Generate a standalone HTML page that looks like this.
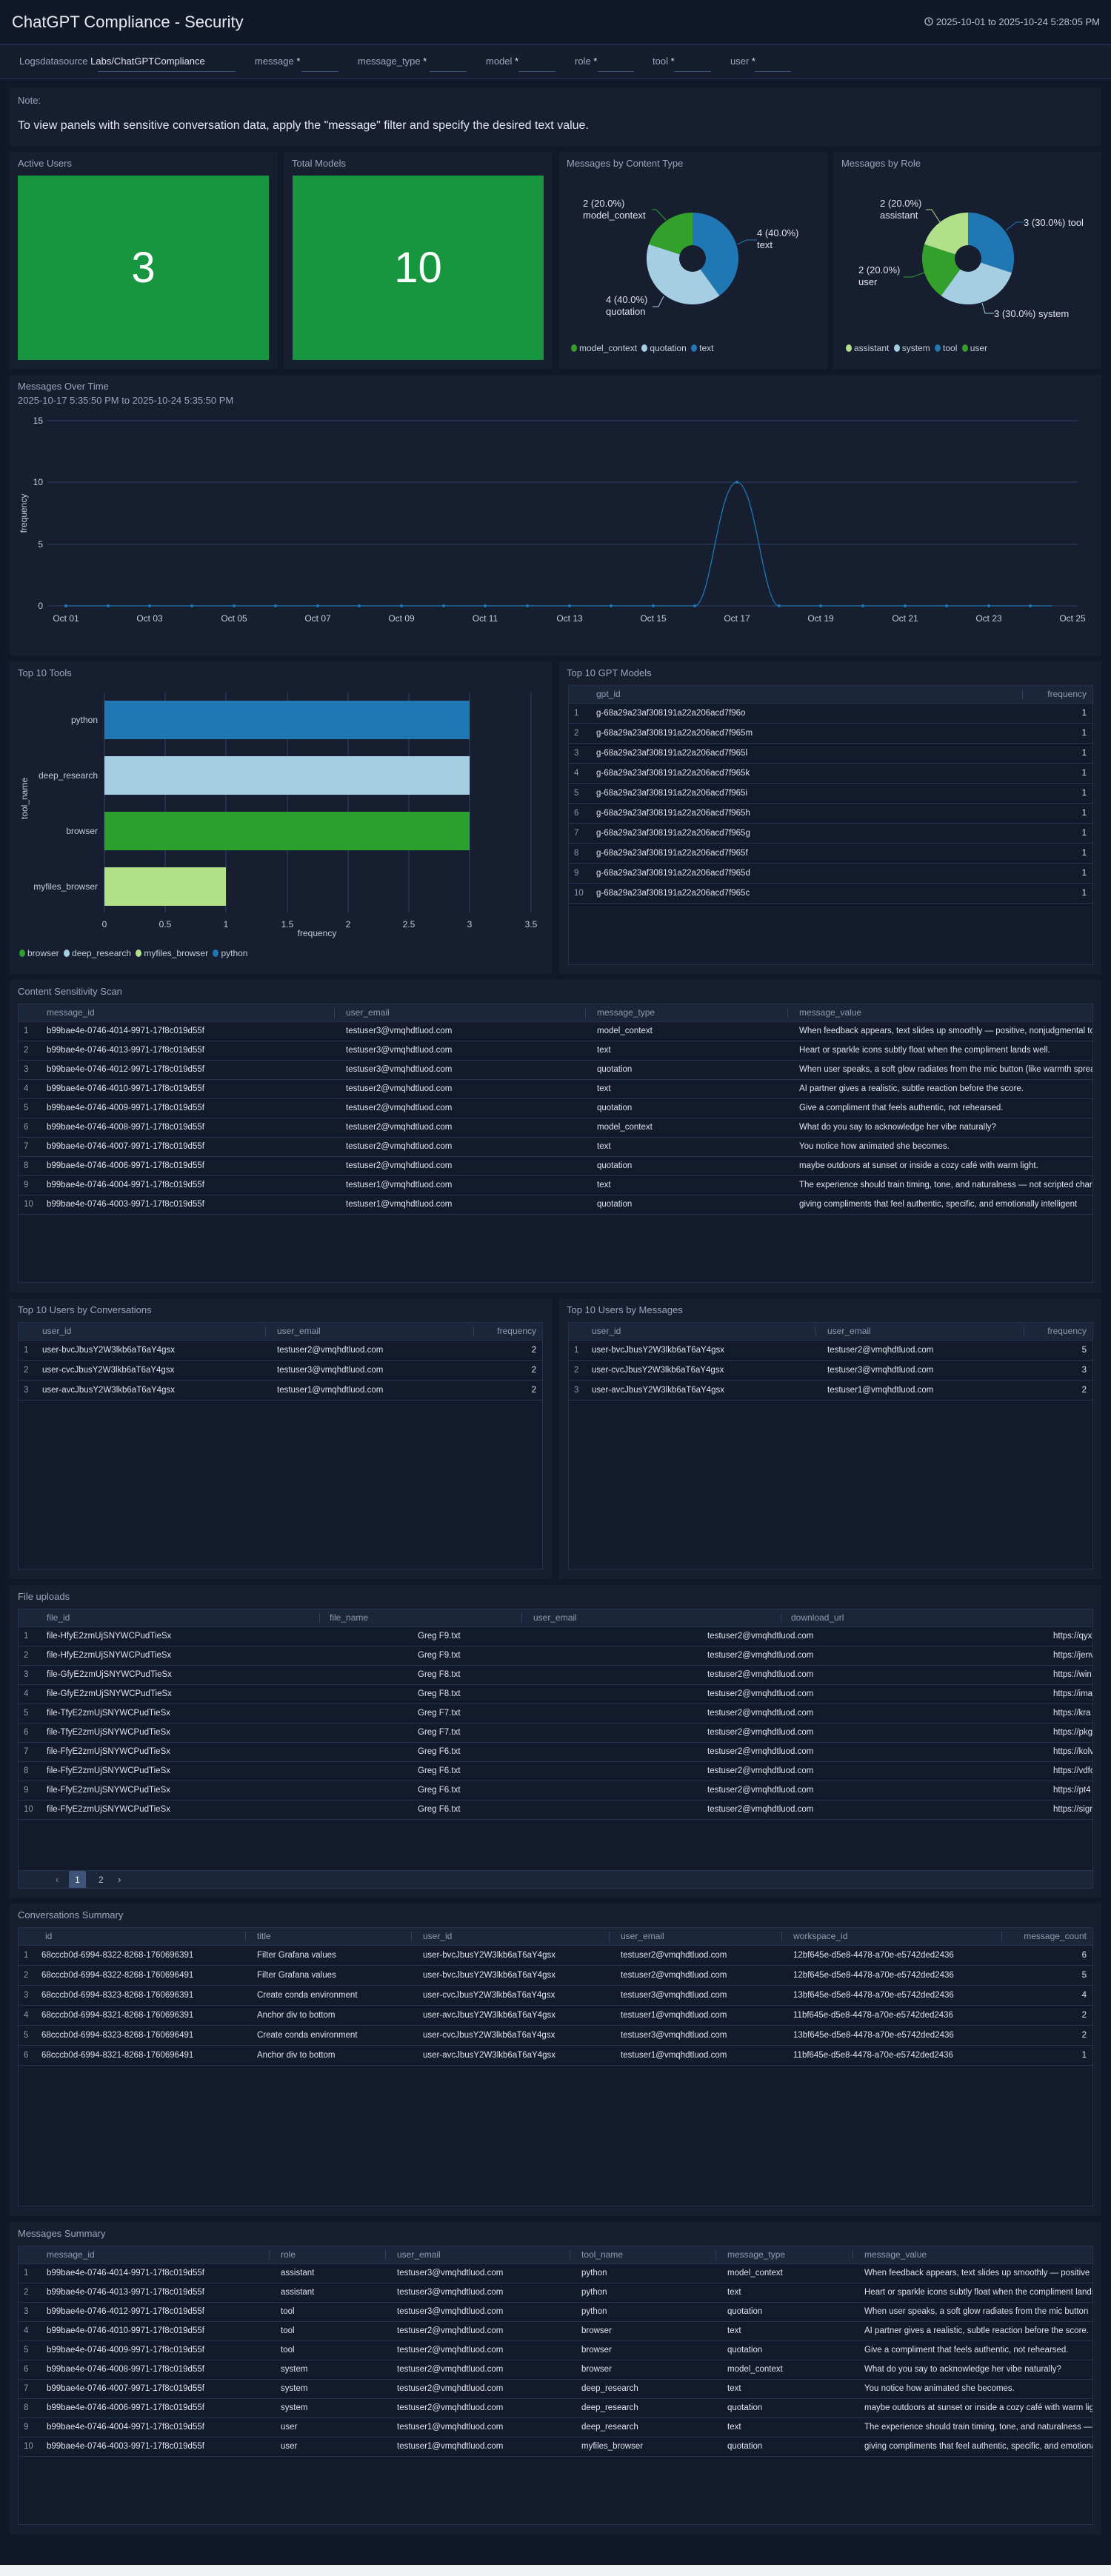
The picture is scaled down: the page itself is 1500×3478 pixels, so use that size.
<!DOCTYPE html>
<html><head><meta charset="utf-8">
<style>
*{box-sizing:border-box;margin:0;padding:0}
html,body{width:1500px;height:3478px;background:#f0f3f4;overflow:hidden}
body{font-family:"Liberation Sans",Arial,sans-serif;color:#d8dde6;position:relative}
#page{position:absolute;left:0;top:0;width:1500px;height:3463px;background:#111827}
.abs{position:absolute}
.panel{position:absolute;background:#161e30}
.ptitle{position:absolute;left:11px;top:8px;font-size:13px;color:#9aa6ba;white-space:nowrap}
.tbl{position:absolute;border:1px solid #24334d;background:#131a2b;overflow:hidden}
table{border-collapse:collapse;table-layout:fixed;width:100%}
th{height:23px;background:#1b263a;color:#8e9bb0;font-weight:normal;font-size:12px;text-align:left;white-space:nowrap;overflow:hidden;padding:0 8px;border-bottom:1px solid #24334d;position:relative}
th.s::before{content:"";position:absolute;left:0;top:5px;height:13px;border-left:1px solid #2e4060}
td{font-size:11.5px;white-space:nowrap;overflow:hidden;padding:0 8px;border-bottom:1px solid #24334d;color:#dde2ea}
td.n{color:#8e9bb0;padding:0 0 0 7px}
td.v{overflow:visible}
.r{text-align:right}
.r26 td{height:26px}
.r27 td{height:27px}
.flt{position:absolute;top:75px;font-size:13px;color:#9aa6ba;white-space:nowrap}
.fv{color:#e2e6ee}
.ul{position:absolute;top:96px;height:1px;background:#3b5278}
.lg{position:absolute;font-size:12px;color:#c5ccd8;white-space:nowrap}
.dot{display:inline-block;width:8px;height:10px;border-radius:50%;margin-right:3px;vertical-align:-1px}
</style></head><body>
<div id="page"></div>

<div class="abs" style="left:16px;top:17px;font-size:22px;color:#e8ebf0">ChatGPT Compliance - Security</div>
<div class="abs" style="right:15px;top:22px;font-size:13px;color:#b8c0cc;white-space:nowrap">
<svg width="12" height="12" viewBox="0 0 12 12" style="vertical-align:-1px"><circle cx="6" cy="6" r="5" fill="none" stroke="#b8c0cc" stroke-width="1.3"/><path d="M6 3v3.2l2 1.2" fill="none" stroke="#b8c0cc" stroke-width="1.2"/></svg> 2025-10-01 to 2025-10-24 5:28:05 PM</div>
<div class="abs" style="left:0;top:60px;width:1500px;height:47px;background:#151d2f;border-top:1px solid #26395a;border-bottom:1px solid #26395a"></div>
<div class="flt" style="left:26px">Logsdatasource <span class="fv">Labs/ChatGPTCompliance</span></div>
<div class="ul" style="left:132px;width:186px"></div>
<div class="flt" style="left:344px">message <span class="fv">*</span></div><div class="ul" style="left:407px;width:50px"></div>
<div class="flt" style="left:483px">message_type <span class="fv">*</span></div><div class="ul" style="left:580px;width:50px"></div>
<div class="flt" style="left:656px">model <span class="fv">*</span></div><div class="ul" style="left:700px;width:50px"></div>
<div class="flt" style="left:776px">role <span class="fv">*</span></div><div class="ul" style="left:807px;width:49px"></div>
<div class="flt" style="left:881px">tool <span class="fv">*</span></div><div class="ul" style="left:910px;width:50px"></div>
<div class="flt" style="left:986px">user <span class="fv">*</span></div><div class="ul" style="left:1019px;width:49px"></div>

<div class="panel" style="left:13px;top:119px;width:1474px;height:78px">
<div class="abs" style="left:11px;top:9px;font-size:13px;color:#9aa6ba">Note:</div>
<div class="abs" style="left:11px;top:42px;font-size:16px;color:#e2e6ee;white-space:nowrap">To view panels with sensitive conversation data, apply the "message" filter and specify the desired text value.</div>
</div>

<div class="panel" style="left:13px;top:205px;width:362px;height:293px"><div class="ptitle">Active Users</div>
<div class="abs" style="left:11px;top:32px;width:339px;height:249px;background:#18953f;color:#fff;font-size:58px;display:flex;align-items:center;justify-content:center">3</div></div>
<div class="panel" style="left:383px;top:205px;width:362px;height:293px"><div class="ptitle">Total Models</div>
<div class="abs" style="left:12px;top:32px;width:339px;height:249px;background:#18953f;color:#fff;font-size:58px;display:flex;align-items:center;justify-content:center">10</div></div>
<div class="panel" style="left:754px;top:205px;width:363px;height:293px"><div class="ptitle">Messages by Content Type</div></div>
<div class="panel" style="left:1125px;top:205px;width:362px;height:293px"><div class="ptitle">Messages by Role</div></div>

<svg class="abs" style="left:0;top:0" width="1500" height="500">
<g font-family="Liberation Sans, Arial, sans-serif" font-size="13" fill="#dfe3ea">
<path d="M935,349 L935,287 A62,62 0 0 1 971.4,399.2 Z" fill="#1f78b4"/>
<path d="M935,349 L971.4,399.2 A62,62 0 0 1 876,329.8 Z" fill="#a6cee3"/>
<path d="M935,349 L876,329.8 A62,62 0 0 1 935,287 Z" fill="#33a02c"/>
<circle cx="935" cy="349" r="18" fill="#161e30"/>
<polyline points="880,283 886,283 899,297" fill="none" stroke="#33a02c"/>
<polyline points="995,330 1008,324 1022,324" fill="none" stroke="#1f78b4"/>
<polyline points="896,400 889,414 881,414" fill="none" stroke="#a6cee3"/>
<text x="787" y="279">2 (20.0%)</text><text x="787" y="295">model_context</text>
<text x="1022" y="319">4 (40.0%)</text><text x="1022" y="335">text</text>
<text x="818" y="409">4 (40.0%)</text><text x="818" y="425">quotation</text>
<path d="M1307,349 L1307,287 A62,62 0 0 1 1366,368.2 Z" fill="#1f78b4"/>
<path d="M1307,349 L1366,368.2 A62,62 0 0 1 1270.6,399.2 Z" fill="#a6cee3"/>
<path d="M1307,349 L1270.6,399.2 A62,62 0 0 1 1248,329.8 Z" fill="#33a02c"/>
<path d="M1307,349 L1248,329.8 A62,62 0 0 1 1307,287 Z" fill="#b2df8a"/>
<circle cx="1307" cy="349" r="18" fill="#161e30"/>
<polyline points="1250,283 1258,283 1269,300" fill="none" stroke="#b2df8a"/>
<polyline points="1358,311 1372,300 1382,300" fill="none" stroke="#1f78b4"/>
<polyline points="1248,368 1232,374 1220,374" fill="none" stroke="#33a02c"/>
<polyline points="1326,409 1330,423 1342,423" fill="none" stroke="#a6cee3"/>
<text x="1188" y="279">2 (20.0%)</text><text x="1188" y="295">assistant</text>
<text x="1382" y="305">3 (30.0%) tool</text>
<text x="1159" y="369">2 (20.0%)</text><text x="1159" y="385">user</text>
<text x="1342" y="428">3 (30.0%) system</text>
</g></svg>
<div class="lg" style="left:771px;top:463px"><span class="dot" style="background:#33a02c"></span>model_context <span class="dot" style="background:#a6cee3;margin-left:3px"></span>quotation <span class="dot" style="background:#1f78b4;margin-left:3px"></span>text</div>
<div class="lg" style="left:1142px;top:463px"><span class="dot" style="background:#b2df8a"></span>assistant <span class="dot" style="background:#a6cee3;margin-left:3px"></span>system <span class="dot" style="background:#1f78b4;margin-left:3px"></span>tool <span class="dot" style="background:#33a02c;margin-left:3px"></span>user</div>

<div class="panel" style="left:13px;top:506px;width:1474px;height:379px">
<div class="ptitle">Messages Over Time</div>
<div class="abs" style="left:11px;top:27px;font-size:13px;color:#9aa6ba;white-space:nowrap">2025-10-17 5:35:50 PM to 2025-10-24 5:35:50 PM</div>
</div>
<svg class="abs" style="left:0;top:500px" width="1500" height="390">
<g font-family="Liberation Sans, Arial, sans-serif" font-size="12" fill="#c5ccd8">
<g stroke="#2c4366" stroke-width="1">
<line x1="64" y1="68" x2="1455" y2="68"/><line x1="64" y1="151" x2="1455" y2="151"/>
<line x1="64" y1="235" x2="1455" y2="235"/><line x1="64" y1="318" x2="1455" y2="318"/>
</g>
<text x="58" y="72" text-anchor="end">15</text><text x="58" y="155" text-anchor="end">10</text>
<text x="58" y="239" text-anchor="end">5</text><text x="58" y="322" text-anchor="end">0</text>
<text transform="translate(36,193) rotate(-90)" text-anchor="middle" font-size="12">frequency</text>
<g text-anchor="middle">
<text x="89" y="339">Oct 01</text><text x="202" y="339">Oct 03</text><text x="316" y="339">Oct 05</text><text x="429" y="339">Oct 07</text><text x="542" y="339">Oct 09</text><text x="655" y="339">Oct 11</text><text x="769" y="339">Oct 13</text><text x="882" y="339">Oct 15</text><text x="995" y="339">Oct 17</text><text x="1108" y="339">Oct 19</text><text x="1222" y="339">Oct 21</text><text x="1335" y="339">Oct 23</text><text x="1448" y="339">Oct 25</text>
</g>
<path d="M89,318 L938,318 C960,318 970,151 995,151 C1020,151 1030,318 1052,318 L1420,318" fill="none" stroke="#1f78b4" stroke-width="1.3"/>
<g fill="#1f78b4">
<circle cx="89" cy="318" r="2"/><circle cx="146" cy="318" r="2"/><circle cx="202" cy="318" r="2"/><circle cx="259" cy="318" r="2"/><circle cx="316" cy="318" r="2"/><circle cx="372" cy="318" r="2"/><circle cx="429" cy="318" r="2"/><circle cx="485" cy="318" r="2"/><circle cx="542" cy="318" r="2"/><circle cx="599" cy="318" r="2"/><circle cx="655" cy="318" r="2"/><circle cx="712" cy="318" r="2"/><circle cx="769" cy="318" r="2"/><circle cx="825" cy="318" r="2"/><circle cx="882" cy="318" r="2"/><circle cx="938" cy="318" r="2"/><circle cx="995" cy="151" r="2"/><circle cx="1052" cy="318" r="2"/><circle cx="1108" cy="318" r="2"/><circle cx="1165" cy="318" r="2"/><circle cx="1222" cy="318" r="2"/><circle cx="1278" cy="318" r="2"/><circle cx="1335" cy="318" r="2"/><circle cx="1391" cy="318" r="2"/>
</g></g></svg>

<div class="panel" style="left:13px;top:893px;width:732px;height:422px"><div class="ptitle">Top 10 Tools</div></div>
<svg class="abs" style="left:0;top:890px" width="750" height="420">
<g font-family="Liberation Sans, Arial, sans-serif" font-size="12" fill="#c5ccd8">
<g stroke="#2c4366"><line x1="141" y1="45" x2="141" y2="342"/><line x1="223" y1="45" x2="223" y2="342"/><line x1="305" y1="45" x2="305" y2="342"/><line x1="388" y1="45" x2="388" y2="342"/><line x1="470" y1="45" x2="470" y2="342"/><line x1="552" y1="45" x2="552" y2="342"/><line x1="634" y1="45" x2="634" y2="342"/><line x1="717" y1="45" x2="717" y2="342"/></g>
<rect x="141" y="56" width="493" height="52" fill="#1f78b4"/>
<rect x="141" y="131" width="493" height="52" fill="#a6cee3"/>
<rect x="141" y="206" width="493" height="52" fill="#2ca02c"/>
<rect x="141" y="281" width="164" height="52" fill="#b2df8a"/>
<g text-anchor="end"><text x="132" y="86">python</text><text x="132" y="161">deep_research</text><text x="132" y="236">browser</text><text x="132" y="311">myfiles_browser</text></g>
<text transform="translate(37,188) rotate(-90)" text-anchor="middle">tool_name</text>
<g text-anchor="middle"><text x="141" y="362">0</text><text x="223" y="362">0.5</text><text x="305" y="362">1</text><text x="388" y="362">1.5</text><text x="470" y="362">2</text><text x="552" y="362">2.5</text><text x="634" y="362">3</text><text x="717" y="362">3.5</text><text x="428" y="374">frequency</text></g>
</g></svg>
<div class="lg" style="left:26px;top:1280px"><span class="dot" style="background:#2ca02c"></span>browser <span class="dot" style="background:#a6cee3;margin-left:3px"></span>deep_research <span class="dot" style="background:#b2df8a;margin-left:3px"></span>myfiles_browser <span class="dot" style="background:#1f78b4;margin-left:3px"></span>python</div>

<div class="panel" style="left:754px;top:893px;width:733px;height:422px"><div class="ptitle">Top 10 GPT Models</div></div>
<div class="tbl" style="left:767px;top:925px;width:709px;height:378px">
<table class="r27"><colgroup><col style="width:29px"><col><col style="width:95px"></colgroup>
<tr><th></th><th>gpt_id</th><th class="s r">frequency</th></tr>
<tr><td class="n">1</td><td>g-68a29a23af308191a22a206acd7f96o</td><td class="r">1</td></tr>
<tr><td class="n">2</td><td>g-68a29a23af308191a22a206acd7f965m</td><td class="r">1</td></tr>
<tr><td class="n">3</td><td>g-68a29a23af308191a22a206acd7f965l</td><td class="r">1</td></tr>
<tr><td class="n">4</td><td>g-68a29a23af308191a22a206acd7f965k</td><td class="r">1</td></tr>
<tr><td class="n">5</td><td>g-68a29a23af308191a22a206acd7f965i</td><td class="r">1</td></tr>
<tr><td class="n">6</td><td>g-68a29a23af308191a22a206acd7f965h</td><td class="r">1</td></tr>
<tr><td class="n">7</td><td>g-68a29a23af308191a22a206acd7f965g</td><td class="r">1</td></tr>
<tr><td class="n">8</td><td>g-68a29a23af308191a22a206acd7f965f</td><td class="r">1</td></tr>
<tr><td class="n">9</td><td>g-68a29a23af308191a22a206acd7f965d</td><td class="r">1</td></tr>
<tr><td class="n">10</td><td>g-68a29a23af308191a22a206acd7f965c</td><td class="r">1</td></tr>
</table></div>

<div class="panel" style="left:13px;top:1323px;width:1474px;height:422px"><div class="ptitle">Content Sensitivity Scan</div></div>
<div class="tbl" style="left:24px;top:1355px;width:1452px;height:377px">
<table class="r26"><colgroup><col style="width:30px"><col style="width:396px"><col style="width:339px"><col style="width:273px"><col></colgroup>
<tr><th></th><th>message_id</th><th class="s" style="padding-left:16px">user_email</th><th class="s" style="padding-left:16px">message_type</th><th class="s" style="padding-left:16px">message_value</th></tr>
<tr><td class="n">1</td><td>b99bae4e-0746-4014-9971-17f8c019d55f</td><td style="padding-left:16px">testuser3@vmqhdtluod.com</td><td style="padding-left:16px">model_context</td><td style="padding-left:16px">When feedback appears, text slides up smoothly — positive, nonjudgmental tone</td></tr>
<tr><td class="n">2</td><td>b99bae4e-0746-4013-9971-17f8c019d55f</td><td style="padding-left:16px">testuser3@vmqhdtluod.com</td><td style="padding-left:16px">text</td><td style="padding-left:16px">Heart or sparkle icons subtly float when the compliment lands well.</td></tr>
<tr><td class="n">3</td><td>b99bae4e-0746-4012-9971-17f8c019d55f</td><td style="padding-left:16px">testuser3@vmqhdtluod.com</td><td style="padding-left:16px">quotation</td><td style="padding-left:16px">When user speaks, a soft glow radiates from the mic button (like warmth spreading)</td></tr>
<tr><td class="n">4</td><td>b99bae4e-0746-4010-9971-17f8c019d55f</td><td style="padding-left:16px">testuser2@vmqhdtluod.com</td><td style="padding-left:16px">text</td><td style="padding-left:16px">AI partner gives a realistic, subtle reaction before the score.</td></tr>
<tr><td class="n">5</td><td>b99bae4e-0746-4009-9971-17f8c019d55f</td><td style="padding-left:16px">testuser2@vmqhdtluod.com</td><td style="padding-left:16px">quotation</td><td style="padding-left:16px">Give a compliment that feels authentic, not rehearsed.</td></tr>
<tr><td class="n">6</td><td>b99bae4e-0746-4008-9971-17f8c019d55f</td><td style="padding-left:16px">testuser2@vmqhdtluod.com</td><td style="padding-left:16px">model_context</td><td style="padding-left:16px">What do you say to acknowledge her vibe naturally?</td></tr>
<tr><td class="n">7</td><td>b99bae4e-0746-4007-9971-17f8c019d55f</td><td style="padding-left:16px">testuser2@vmqhdtluod.com</td><td style="padding-left:16px">text</td><td style="padding-left:16px">You notice how animated she becomes.</td></tr>
<tr><td class="n">8</td><td>b99bae4e-0746-4006-9971-17f8c019d55f</td><td style="padding-left:16px">testuser2@vmqhdtluod.com</td><td style="padding-left:16px">quotation</td><td style="padding-left:16px">maybe outdoors at sunset or inside a cozy café with warm light.</td></tr>
<tr><td class="n">9</td><td>b99bae4e-0746-4004-9971-17f8c019d55f</td><td style="padding-left:16px">testuser1@vmqhdtluod.com</td><td style="padding-left:16px">text</td><td style="padding-left:16px">The experience should train timing, tone, and naturalness — not scripted charm.</td></tr>
<tr><td class="n">10</td><td>b99bae4e-0746-4003-9971-17f8c019d55f</td><td style="padding-left:16px">testuser1@vmqhdtluod.com</td><td style="padding-left:16px">quotation</td><td style="padding-left:16px">giving compliments that feel authentic, specific, and emotionally intelligent</td></tr>
</table></div>

<div class="panel" style="left:13px;top:1753px;width:732px;height:379px"><div class="ptitle">Top 10 Users by Conversations</div></div>
<div class="tbl" style="left:24px;top:1785px;width:709px;height:334px">
<table class="r27"><colgroup><col style="width:24px"><col style="width:309px"><col style="width:281px"><col></colgroup>
<tr><th></th><th>user_id</th><th class="s" style="padding-left:16px">user_email</th><th class="s r">frequency</th></tr>
<tr><td class="n">1</td><td>user-bvcJbusY2W3lkb6aT6aY4gsx</td><td style="padding-left:16px">testuser2@vmqhdtluod.com</td><td class="r">2</td></tr>
<tr><td class="n">2</td><td>user-cvcJbusY2W3lkb6aT6aY4gsx</td><td style="padding-left:16px">testuser3@vmqhdtluod.com</td><td class="r">2</td></tr>
<tr><td class="n">3</td><td>user-avcJbusY2W3lkb6aT6aY4gsx</td><td style="padding-left:16px">testuser1@vmqhdtluod.com</td><td class="r">2</td></tr>
</table></div>
<div class="panel" style="left:754px;top:1753px;width:733px;height:379px"><div class="ptitle">Top 10 Users by Messages</div></div>
<div class="tbl" style="left:767px;top:1785px;width:709px;height:334px">
<table class="r27"><colgroup><col style="width:23px"><col style="width:310px"><col style="width:281px"><col></colgroup>
<tr><th></th><th>user_id</th><th class="s" style="padding-left:16px">user_email</th><th class="s r">frequency</th></tr>
<tr><td class="n">1</td><td>user-bvcJbusY2W3lkb6aT6aY4gsx</td><td style="padding-left:16px">testuser2@vmqhdtluod.com</td><td class="r">5</td></tr>
<tr><td class="n">2</td><td>user-cvcJbusY2W3lkb6aT6aY4gsx</td><td style="padding-left:16px">testuser3@vmqhdtluod.com</td><td class="r">3</td></tr>
<tr><td class="n">3</td><td>user-avcJbusY2W3lkb6aT6aY4gsx</td><td style="padding-left:16px">testuser1@vmqhdtluod.com</td><td class="r">2</td></tr>
</table></div>

<div class="panel" style="left:13px;top:2140px;width:1474px;height:422px"><div class="ptitle">File uploads</div></div>
<div class="tbl" style="left:24px;top:2172px;width:1452px;height:378px">
<table class="r26"><colgroup><col style="width:30px"><col style="width:376px"><col style="width:273px"><col style="width:350px"><col></colgroup>
<tr><th></th><th>file_id</th><th class="s" style="padding-left:14px">file_name</th><th class="s" style="padding-left:16px">user_email</th><th class="s" style="padding-left:14px">download_url</th></tr>
<tr><td class="n">1</td><td>file-HfyE2zmUjSNYWCPudTieSx</td><td style="padding-left:133px">Greg F9.txt</td><td class="v" style="padding-left:251px">testuser2@vmqhdtluod.com</td><td style="padding-left:368px">https://qyxz</td></tr>
<tr><td class="n">2</td><td>file-HfyE2zmUjSNYWCPudTieSx</td><td style="padding-left:133px">Greg F9.txt</td><td class="v" style="padding-left:251px">testuser2@vmqhdtluod.com</td><td style="padding-left:368px">https://jenv</td></tr>
<tr><td class="n">3</td><td>file-GfyE2zmUjSNYWCPudTieSx</td><td style="padding-left:133px">Greg F8.txt</td><td class="v" style="padding-left:251px">testuser2@vmqhdtluod.com</td><td style="padding-left:368px">https://win</td></tr>
<tr><td class="n">4</td><td>file-GfyE2zmUjSNYWCPudTieSx</td><td style="padding-left:133px">Greg F8.txt</td><td class="v" style="padding-left:251px">testuser2@vmqhdtluod.com</td><td style="padding-left:368px">https://ima</td></tr>
<tr><td class="n">5</td><td>file-TfyE2zmUjSNYWCPudTieSx</td><td style="padding-left:133px">Greg F7.txt</td><td class="v" style="padding-left:251px">testuser2@vmqhdtluod.com</td><td style="padding-left:368px">https://kra</td></tr>
<tr><td class="n">6</td><td>file-TfyE2zmUjSNYWCPudTieSx</td><td style="padding-left:133px">Greg F7.txt</td><td class="v" style="padding-left:251px">testuser2@vmqhdtluod.com</td><td style="padding-left:368px">https://pkg</td></tr>
<tr><td class="n">7</td><td>file-FfyE2zmUjSNYWCPudTieSx</td><td style="padding-left:133px">Greg F6.txt</td><td class="v" style="padding-left:251px">testuser2@vmqhdtluod.com</td><td style="padding-left:368px">https://kolv</td></tr>
<tr><td class="n">8</td><td>file-FfyE2zmUjSNYWCPudTieSx</td><td style="padding-left:133px">Greg F6.txt</td><td class="v" style="padding-left:251px">testuser2@vmqhdtluod.com</td><td style="padding-left:368px">https://vdfc</td></tr>
<tr><td class="n">9</td><td>file-FfyE2zmUjSNYWCPudTieSx</td><td style="padding-left:133px">Greg F6.txt</td><td class="v" style="padding-left:251px">testuser2@vmqhdtluod.com</td><td style="padding-left:368px">https://pt4</td></tr>
<tr><td class="n">10</td><td>file-FfyE2zmUjSNYWCPudTieSx</td><td style="padding-left:133px">Greg F6.txt</td><td class="v" style="padding-left:251px">testuser2@vmqhdtluod.com</td><td style="padding-left:368px">https://sign</td></tr>
</table>
<div class="abs" style="left:0;top:352px;width:1452px;height:26px;background:#1b263a;border-top:1px solid #24334d"></div>
<div class="abs" style="left:50px;top:357px;font-size:13px;color:#7f8ca3">&#x2039;</div>
<div class="abs" style="left:68px;top:353px;width:23px;height:24px;background:#3d5478;border-radius:2px;color:#fff;font-size:12px;text-align:center;line-height:24px">1</div>
<div class="abs" style="left:108px;top:358px;font-size:12px;color:#b8c0cc">2</div>
<div class="abs" style="left:134px;top:357px;font-size:13px;color:#b8c0cc">&#x203A;</div>
</div>

<div class="panel" style="left:13px;top:2570px;width:1474px;height:422px"><div class="ptitle">Conversations Summary</div></div>
<div class="tbl" style="left:24px;top:2602px;width:1452px;height:377px">
<table class="r27"><colgroup><col style="width:23px"><col style="width:283px"><col style="width:224px"><col style="width:267px"><col style="width:233px"><col style="width:297px"><col></colgroup>
<tr><th></th><th style="padding-left:13px">id</th><th class="s" style="padding-left:16px">title</th><th class="s" style="padding-left:16px">user_id</th><th class="s" style="padding-left:16px">user_email</th><th class="s" style="padding-left:16px">workspace_id</th><th class="s r">message_count</th></tr>
<tr><td class="n">1</td><td>68cccb0d-6994-8322-8268-1760696391</td><td style="padding-left:16px">Filter Grafana values</td><td style="padding-left:16px">user-bvcJbusY2W3lkb6aT6aY4gsx</td><td style="padding-left:16px">testuser2@vmqhdtluod.com</td><td style="padding-left:16px">12bf645e-d5e8-4478-a70e-e5742ded2436</td><td class="r">6</td></tr>
<tr><td class="n">2</td><td>68cccb0d-6994-8322-8268-1760696491</td><td style="padding-left:16px">Filter Grafana values</td><td style="padding-left:16px">user-bvcJbusY2W3lkb6aT6aY4gsx</td><td style="padding-left:16px">testuser2@vmqhdtluod.com</td><td style="padding-left:16px">12bf645e-d5e8-4478-a70e-e5742ded2436</td><td class="r">5</td></tr>
<tr><td class="n">3</td><td>68cccb0d-6994-8323-8268-1760696391</td><td style="padding-left:16px">Create conda environment</td><td style="padding-left:16px">user-cvcJbusY2W3lkb6aT6aY4gsx</td><td style="padding-left:16px">testuser3@vmqhdtluod.com</td><td style="padding-left:16px">13bf645e-d5e8-4478-a70e-e5742ded2436</td><td class="r">4</td></tr>
<tr><td class="n">4</td><td>68cccb0d-6994-8321-8268-1760696391</td><td style="padding-left:16px">Anchor div to bottom</td><td style="padding-left:16px">user-avcJbusY2W3lkb6aT6aY4gsx</td><td style="padding-left:16px">testuser1@vmqhdtluod.com</td><td style="padding-left:16px">11bf645e-d5e8-4478-a70e-e5742ded2436</td><td class="r">2</td></tr>
<tr><td class="n">5</td><td>68cccb0d-6994-8323-8268-1760696491</td><td style="padding-left:16px">Create conda environment</td><td style="padding-left:16px">user-cvcJbusY2W3lkb6aT6aY4gsx</td><td style="padding-left:16px">testuser3@vmqhdtluod.com</td><td style="padding-left:16px">13bf645e-d5e8-4478-a70e-e5742ded2436</td><td class="r">2</td></tr>
<tr><td class="n">6</td><td>68cccb0d-6994-8321-8268-1760696491</td><td style="padding-left:16px">Anchor div to bottom</td><td style="padding-left:16px">user-avcJbusY2W3lkb6aT6aY4gsx</td><td style="padding-left:16px">testuser1@vmqhdtluod.com</td><td style="padding-left:16px">11bf645e-d5e8-4478-a70e-e5742ded2436</td><td class="r">1</td></tr>
</table></div>

<div class="panel" style="left:13px;top:3000px;width:1474px;height:422px"><div class="ptitle">Messages Summary</div></div>
<div class="tbl" style="left:24px;top:3032px;width:1452px;height:377px">
<table class="r26"><colgroup><col style="width:30px"><col style="width:308px"><col style="width:157px"><col style="width:249px"><col style="width:197px"><col style="width:185px"><col></colgroup>
<tr><th></th><th>message_id</th><th class="s" style="padding-left:16px">role</th><th class="s" style="padding-left:16px">user_email</th><th class="s" style="padding-left:16px">tool_name</th><th class="s" style="padding-left:16px">message_type</th><th class="s" style="padding-left:16px">message_value</th></tr>
<tr><td class="n">1</td><td>b99bae4e-0746-4014-9971-17f8c019d55f</td><td style="padding-left:16px">assistant</td><td style="padding-left:16px">testuser3@vmqhdtluod.com</td><td style="padding-left:16px">python</td><td style="padding-left:16px">model_context</td><td style="padding-left:16px">When feedback appears, text slides up smoothly — positive</td></tr>
<tr><td class="n">2</td><td>b99bae4e-0746-4013-9971-17f8c019d55f</td><td style="padding-left:16px">assistant</td><td style="padding-left:16px">testuser3@vmqhdtluod.com</td><td style="padding-left:16px">python</td><td style="padding-left:16px">text</td><td style="padding-left:16px">Heart or sparkle icons subtly float when the compliment lands</td></tr>
<tr><td class="n">3</td><td>b99bae4e-0746-4012-9971-17f8c019d55f</td><td style="padding-left:16px">tool</td><td style="padding-left:16px">testuser3@vmqhdtluod.com</td><td style="padding-left:16px">python</td><td style="padding-left:16px">quotation</td><td style="padding-left:16px">When user speaks, a soft glow radiates from the mic button</td></tr>
<tr><td class="n">4</td><td>b99bae4e-0746-4010-9971-17f8c019d55f</td><td style="padding-left:16px">tool</td><td style="padding-left:16px">testuser2@vmqhdtluod.com</td><td style="padding-left:16px">browser</td><td style="padding-left:16px">text</td><td style="padding-left:16px">AI partner gives a realistic, subtle reaction before the score.</td></tr>
<tr><td class="n">5</td><td>b99bae4e-0746-4009-9971-17f8c019d55f</td><td style="padding-left:16px">tool</td><td style="padding-left:16px">testuser2@vmqhdtluod.com</td><td style="padding-left:16px">browser</td><td style="padding-left:16px">quotation</td><td style="padding-left:16px">Give a compliment that feels authentic, not rehearsed.</td></tr>
<tr><td class="n">6</td><td>b99bae4e-0746-4008-9971-17f8c019d55f</td><td style="padding-left:16px">system</td><td style="padding-left:16px">testuser2@vmqhdtluod.com</td><td style="padding-left:16px">browser</td><td style="padding-left:16px">model_context</td><td style="padding-left:16px">What do you say to acknowledge her vibe naturally?</td></tr>
<tr><td class="n">7</td><td>b99bae4e-0746-4007-9971-17f8c019d55f</td><td style="padding-left:16px">system</td><td style="padding-left:16px">testuser2@vmqhdtluod.com</td><td style="padding-left:16px">deep_research</td><td style="padding-left:16px">text</td><td style="padding-left:16px">You notice how animated she becomes.</td></tr>
<tr><td class="n">8</td><td>b99bae4e-0746-4006-9971-17f8c019d55f</td><td style="padding-left:16px">system</td><td style="padding-left:16px">testuser2@vmqhdtluod.com</td><td style="padding-left:16px">deep_research</td><td style="padding-left:16px">quotation</td><td style="padding-left:16px">maybe outdoors at sunset or inside a cozy café with warm light.</td></tr>
<tr><td class="n">9</td><td>b99bae4e-0746-4004-9971-17f8c019d55f</td><td style="padding-left:16px">user</td><td style="padding-left:16px">testuser1@vmqhdtluod.com</td><td style="padding-left:16px">deep_research</td><td style="padding-left:16px">text</td><td style="padding-left:16px">The experience should train timing, tone, and naturalness — not</td></tr>
<tr><td class="n">10</td><td>b99bae4e-0746-4003-9971-17f8c019d55f</td><td style="padding-left:16px">user</td><td style="padding-left:16px">testuser1@vmqhdtluod.com</td><td style="padding-left:16px">myfiles_browser</td><td style="padding-left:16px">quotation</td><td style="padding-left:16px">giving compliments that feel authentic, specific, and emotionally</td></tr>
</table></div>
</body></html>
